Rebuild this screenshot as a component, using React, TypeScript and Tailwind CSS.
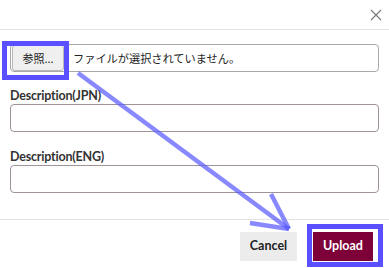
export default function App() {
  return (
    <div className="relative w-[389px] h-[268px] bg-white font-['Lato',sans-serif] text-[#222] overflow-hidden">
      <div className="h-[30px] border-b border-[#e2e2e2] flex justify-end items-center pr-[7px]">
        <svg width="12" height="12" viewBox="0 0 12 12" className="text-[#777]">
          <path d="M1 1 L11 11 M11 1 L1 11" stroke="currentColor" strokeWidth="1.1" />
        </svg>
      </div>

      <div className="px-[10px] pt-[14px] pb-[26px]">
        <div className="h-[28px] border border-[#a9a9a9] rounded-[4px] flex items-center pl-px">
          <div className="h-[26px] w-[52px] bg-[#efefef] border border-[#b8b8b8] rounded-[3px] flex items-center justify-center text-[11px] font-['Noto_Sans_CJK_JP',sans-serif]">
            参照...
          </div>
          <span className="ml-[9px] text-[11.2px] font-['Noto_Sans_CJK_JP',sans-serif]">
            ファイルが選択されていません。
          </span>
        </div>

        <div className="mt-[16px] h-[16px] text-[12.5px] leading-[16px] font-bold text-[#333] tracking-[-0.2px]">Description(JPN)</div>
        <div className="h-[28px] border border-[#a0939a] rounded-[4px]" />

        <div className="mt-[17px] h-[16px] text-[12.5px] leading-[16px] font-bold text-[#333] tracking-[-0.2px]">Description(ENG)</div>
        <div className="h-[28px] border border-[#a0939a] rounded-[4px]" />
      </div>

      <div className="border-t border-[#e2e2e2] flex justify-end gap-[16px] pr-[16px] pt-[12px]">
        <button className="h-[29px] w-[57px] bg-[#ececec] text-[12.5px] font-bold text-[#222]">Cancel</button>
        <button className="h-[29px] w-[60px] bg-[#7d0038] text-[12.5px] font-bold text-white">Upload</button>
      </div>

      {/* annotation overlay */}
      <div className="absolute left-[2px] top-[41px] w-[67px] h-[39px] border-[5px] border-[#5a50ff]" />
      <div className="absolute left-[307px] top-[224px] w-[76px] h-[43px] border-[5px] border-[#5a50ff]" />
      <svg className="absolute left-0 top-0" width="389" height="268" viewBox="0 0 389 268">
        <g stroke="#5c5cff" strokeOpacity="0.72" strokeWidth="4.5" strokeLinecap="butt" fill="none">
          <path d="M78 73 L289 229" />
          <path d="M271 194 L289 229" />
          <path d="M250 223 L289 229" />
        </g>
      </svg>
    </div>
  );
}
